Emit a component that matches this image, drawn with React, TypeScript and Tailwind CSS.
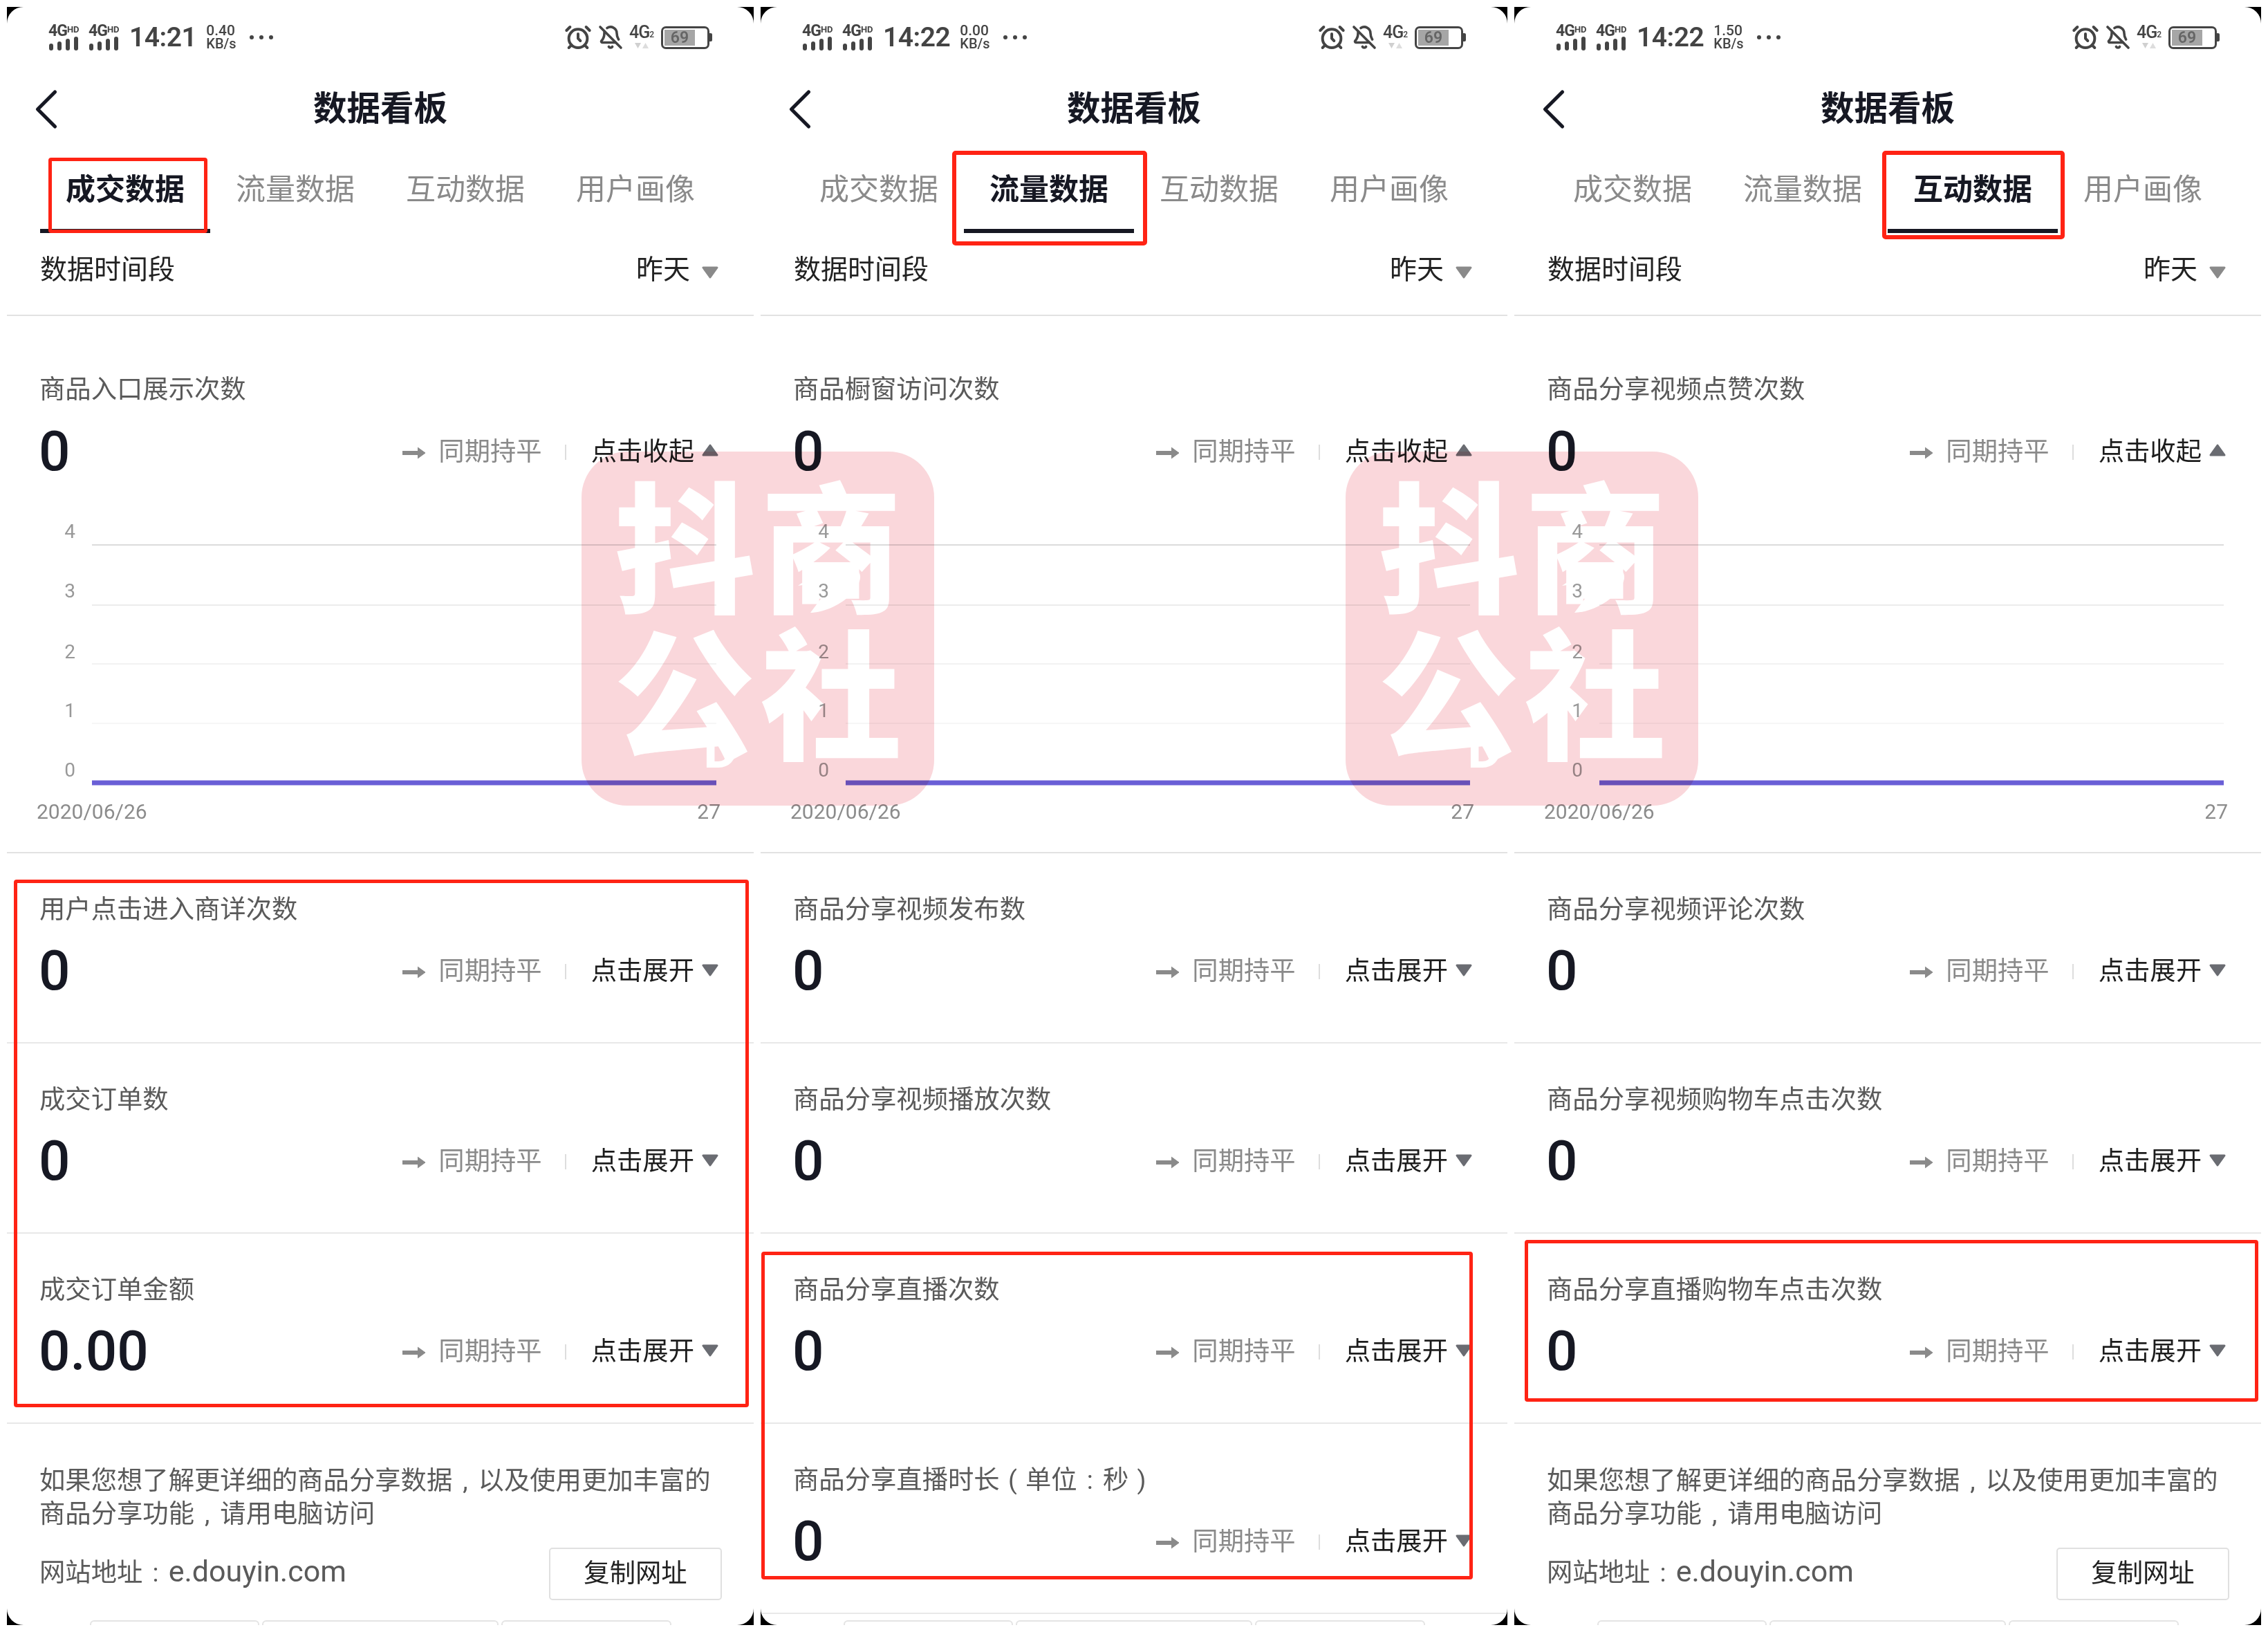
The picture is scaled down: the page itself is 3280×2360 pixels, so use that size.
import type { ReactNode } from "react";
import { AlarmClock, BellOff, ChevronLeft } from "lucide-react";

const Punct = ({ c }: { c: string }) => (
  <span className="inline-block w-[1em] text-center">{c}</span>
);

const Signal = () => (
  <div className="flex flex-col w-[45px]">
    <div className="flex items-start h-[17px] text-[#444] font-bold leading-[17px]">
      <span className="text-[23px] tracking-[-1px]">4G</span>
      <span className="text-[13px] leading-[13px]">HD</span>
    </div>
    <div className="flex items-end gap-[6px] h-[20px] pl-[1px]">
      <span className="w-[6px] h-[10px] rounded-[3px] bg-[#444]" />
      <span className="w-[6px] h-[13px] rounded-[3px] bg-[#444]" />
      <span className="w-[6px] h-[17px] rounded-[3px] bg-[#444]" />
      <span className="w-[6px] h-[20px] rounded-[3px] bg-[#444]" />
    </div>
  </div>
);

const StatusBar = ({ time, speed }: { time: string; speed: string }) => (
  <div className="flex items-center justify-between h-[90px] pl-[60px] pr-[60px] pb-[2px]">
    <div className="flex items-center">
      <Signal />
      <div className="ml-[13px]">
        <Signal />
      </div>
      <span className="ml-[14px] text-[39px] leading-[40px] font-semibold text-[#444] tracking-[-0.5px]">{time}</span>
      <div className="ml-[14px] flex flex-col text-[#444] font-medium text-[20px] leading-[19px]">
        <span className="text-[21px]">{speed}</span>
        <span>KB/s</span>
      </div>
      <div className="ml-[19px] flex gap-[8px]">
        <span className="w-[6px] h-[6px] rounded-full bg-[#444]" />
        <span className="w-[6px] h-[6px] rounded-full bg-[#444]" />
        <span className="w-[6px] h-[6px] rounded-full bg-[#444]" />
      </div>
    </div>
    <div className="flex items-center">
      <AlarmClock size={40} strokeWidth={2.4} className="text-[#444]" />
      <BellOff size={36} strokeWidth={2.4} className="ml-[9px] text-[#444]" />
      <div className="ml-[9px] flex flex-col items-start w-[37px]">
        <div className="flex items-end text-[#444] font-medium leading-[20px]">
          <span className="text-[25px] tracking-[-1px]">4G</span>
          <span className="text-[12px] leading-[14px]">2</span>
        </div>
        <svg width="24" height="10" viewBox="0 0 24 10" className="ml-[8px] mt-[4px]">
          <polygon points="0,1 9,1 4.5,9" fill="#d0d0d0" />
          <polygon points="11,9 20,9 15.5,1" fill="#dddddd" />
        </svg>
      </div>
      <div className="ml-[9px] flex items-center">
        <div className="relative w-[70px] h-[33px] border-[3px] border-[#444] rounded-[7px] p-[2px]">
          <div className="w-[44px] h-full bg-[#a6a6a6]" />
          <span className="absolute left-[2px] top-0 w-[44px] text-center text-[23px] leading-[27px] font-semibold text-[#666]">69</span>
        </div>
        <span className="w-[4px] h-[12px] rounded-r-[2px] bg-[#444]" />
      </div>
    </div>
  </div>
);

const Header = () => (
  <div className="relative flex items-center justify-center h-[112px] pt-[4px]">
    <ChevronLeft size={100} strokeWidth={1.25} className="absolute left-[7px] top-[8px] text-[#161823]" />
    <span className="text-[48.5px] leading-[56px] font-bold text-[#161823]">数据看板</span>
  </div>
);

const tabNames = ["成交数据", "流量数据", "互动数据", "用户画像"];

const Tabs = ({ active }: { active: number }) => (
  <div className="grid grid-cols-4 h-[125px] px-[48px]">
    {tabNames.map((name, i) => (
      <div
        key={name}
        className={
          i === active
            ? "flex items-center justify-center pt-[6px] border-b-[6px] border-[#161823] text-[43px] font-bold text-[#161823]"
            : "flex items-center justify-center text-[43px] text-[#8a8a8a]"
        }
      >
        {name}
      </div>
    ))}
  </div>
);

const Triangle = ({ up, color }: { up?: boolean; color: string }) => (
  <svg width="26" height="22" viewBox="0 0 26 22" className="shrink-0">
    <polygon
      points={up ? "13,3 23,17 3,17" : "3,4 23,4 13,18"}
      fill={color}
      stroke={color}
      strokeWidth="3"
      strokeLinejoin="round"
    />
  </svg>
);

const DateRow = () => (
  <div className="flex items-center justify-between h-[120px] pb-[12px] pl-[48px] pr-[50px] border-b-2 border-[#e2e2e2] text-[39px] text-[#222]">
    <span>数据时间段</span>
    <div className="flex items-center gap-[16px]">
      <span>昨天</span>
      <div className="mt-[8px]">
        <Triangle color="#8a8a8a" />
      </div>
    </div>
  </div>
);

const Chart = () => {
  const lines = [
    { y: 90, labelY: 70, label: "4", color: "#dcdcdc" },
    { y: 177, labelY: 156, label: "3", color: "#ececec" },
    { y: 262, labelY: 244, label: "2", color: "#f2f2f2" },
    { y: 348, labelY: 329, label: "1", color: "#f6f6f6" },
  ];
  return (
    <svg width="1080" height="534" viewBox="0 0 1080 534" className="block">
      {lines.map((l) => (
        <g key={l.label}>
          <line x1="123" x2="1026" y1={l.y} y2={l.y} stroke={l.color} strokeWidth="2" />
          <text x="91" y={l.labelY + 10} textAnchor="middle" fontSize="28" fill="#999999">
            {l.label}
          </text>
        </g>
      ))}
      <text x="91" y="425" textAnchor="middle" fontSize="28" fill="#999999">
        0
      </text>
      <line x1="123" x2="1026" y1="434" y2="434" stroke="#6a5fd6" strokeWidth="7" />
      <text x="43" y="486" fontSize="30" fill="#8c8c8c">
        2020/06/26
      </text>
      <text x="1032" y="486" textAnchor="end" fontSize="30" fill="#8c8c8c">
        27
      </text>
    </svg>
  );
};

const Metric = ({ label, value = "0", first }: { label: ReactNode; value?: string; first?: boolean }) => (
  <div className={first ? "pt-[83px] border-b-2 border-[#e2e2e2]" : "pt-[58px] pb-[58px] border-b-2 border-[#e8e8e8]"}>
    <div className="pl-[47px] h-[46px] text-[37.33px] leading-[46px] text-[#5a5a5a]">{label}</div>
    <div className={first ? "flex items-center justify-between mt-[22px] h-[90px] pl-[46px] pr-[50px]" : "flex items-center justify-between mt-[21px] h-[90px] pl-[46px] pr-[50px]"}>
      <span className="text-[80px] leading-[90px] font-medium text-[#161823]">{value}</span>
      <div className="flex items-center pt-[2px] text-[37.33px]">
        <svg width="36" height="20" viewBox="0 0 36 20" className="mt-[2px]">
          <path d="M1 10H30" stroke="#8a8a8a" strokeWidth="6" />
          <path d="M23 2L34 10L23 18" fill="#8a8a8a" stroke="#8a8a8a" strokeWidth="1" strokeLinejoin="round" />
        </svg>
        <span className="ml-[17px] text-[#8a8a8a]">同期持平</span>
        <span className="ml-[33px] w-[2px] h-[22px] bg-[#dddddd]" />
        <span className="ml-[36px] text-[#1c1c1c]">{first ? "点击收起" : "点击展开"}</span>
        <div className="ml-[10px] -mt-[4px]">
          <Triangle up={first} color="#6a6c72" />
        </div>
      </div>
    </div>
    {first && <Chart />}
  </div>
);

const BottomStrip = () => (
  <div className="flex gap-[4px] pl-[120px] h-[10px]">
    <span className="w-[245px] h-[20px] rounded-t-[6px] border-2 border-[#e4e4e4]" />
    <span className="w-[342px] h-[20px] rounded-t-[6px] border-2 border-[#e4e4e4]" />
    <span className="w-[246px] h-[20px] rounded-t-[6px] border-2 border-[#e4e4e4]" />
  </div>
);

const Footer = () => (
  <div>
    <div className="pt-[58px] pl-[47px] pr-[40px] text-[37.33px] leading-[48px] text-[#5a5a5a] whitespace-nowrap">
      <p>
        如果您想了解更详细的商品分享数据
        <Punct c="," />
        以及使用更加丰富的
      </p>
      <p>
        商品分享功能
        <Punct c="," />
        请用电脑访问
      </p>
    </div>
    <div className="flex items-center justify-between mt-[25px] mb-[29px] pl-[47px] pr-[46px]">
      <span className="pb-[8px] text-[37.33px] text-[#5a5a5a]">
        网站地址
        <Punct c=":" />
        <span className="text-[43px]">e.douyin.com</span>
      </span>
      <button className="w-[250px] h-[76px] rounded-[5px] border-2 border-[#e0e0e0] text-[37.33px] text-[#222]">复制网址</button>
    </div>
    <BottomStrip />
  </div>
);

const Phone = ({ time, speed, active, children }: { time: string; speed: string; active: number; children: ReactNode }) => (
  <div className="w-[1080px] h-[2340px] bg-black shrink-0">
    <div className="h-full bg-white rounded-[24px] overflow-hidden">
      <StatusBar time={time} speed={speed} />
      <Header />
      <Tabs active={active} />
      <DateRow />
      {children}
    </div>
  </div>
);

// pink stamp laid over the shots
const Watermark = ({ className }: { className: string }) => (
  <div className={className}>
    <div className="relative w-[510px] h-[512px] rounded-[66px] bg-[#fad7db] grid grid-cols-[212px_212px] grid-rows-[212px_212px] p-[43px] text-white text-[204px] leading-[212px] font-black text-center">
      <span>抖</span>
      <span>商</span>
      <span>公</span>
      <span>社</span>
      <span className="absolute left-[176px] top-[392px] text-[78px] leading-[78px] font-bold">D</span>
      <svg width="92" height="66" viewBox="0 0 92 66" className="absolute left-[313px] top-[168px]">
        <path d="M0 26C25 8 60 0 80 2C96 5 92 24 75 40C60 55 35 65 18 65L48 25L25 36L30 22Z" fill="#ffffff" />
      </svg>
    </div>
  </div>
);

export default function App() {
  return (
    <div className="relative flex gap-[10px] p-[10px] w-[3280px] h-[2360px] bg-white overflow-hidden [font-family:Roboto,'Noto_Sans_CJK_SC',sans-serif]">
      <Phone time="14:21" speed="0.40" active={0}>
        <Metric first label="商品入口展示次数" />
        <Metric label="用户点击进入商详次数" />
        <Metric label="成交订单数" />
        <Metric label="成交订单金额" value="0.00" />
        <Footer />
      </Phone>
      <Phone time="14:22" speed="0.00" active={1}>
        <Metric first label="商品橱窗访问次数" />
        <Metric label="商品分享视频发布数" />
        <Metric label="商品分享视频播放次数" />
        <Metric label="商品分享直播次数" />
        <Metric
          label={
            <>
              商品分享直播时长
              <Punct c="(" />
              单位
              <Punct c=":" />
              秒
              <Punct c=")" />
            </>
          }
        />
        <div className="pt-[9px]">
          <BottomStrip />
        </div>
      </Phone>
      <Phone time="14:22" speed="1.50" active={2}>
        <Metric first label="商品分享视频点赞次数" />
        <Metric label="商品分享视频评论次数" />
        <Metric label="商品分享视频购物车点击次数" />
        <Metric label="商品分享直播购物车点击次数" />
        <Footer />
      </Phone>

      <Watermark className="absolute left-[841px] top-[653px] mix-blend-multiply" />
      <Watermark className="absolute left-[1946px] top-[653px] mix-blend-multiply" />

      <div className="absolute left-[70px] top-[228px] w-[230px] h-[109px] rounded-[4px] border-[5px] border-[#ff2314]" />
      <div className="absolute left-[1377px] top-[218px] w-[282px] h-[137px] rounded-[5px] border-[6px] border-[#ff2314]" />
      <div className="absolute left-[2722px] top-[218px] w-[264px] h-[128px] rounded-[5px] border-[6px] border-[#ff2314]" />
      <div className="absolute left-[20px] top-[1272px] w-[1063px] h-[763px] rounded-[4px] border-[5px] border-[#ff2314]" />
      <div className="absolute left-[1101px] top-[1810px] w-[1029px] h-[474px] rounded-[4px] border-[5px] border-[#ff2314]" />
      <div className="absolute left-[2205px] top-[1793px] w-[1061px] h-[234px] rounded-[4px] border-[5px] border-[#ff2314]" />
    </div>
  );
}
